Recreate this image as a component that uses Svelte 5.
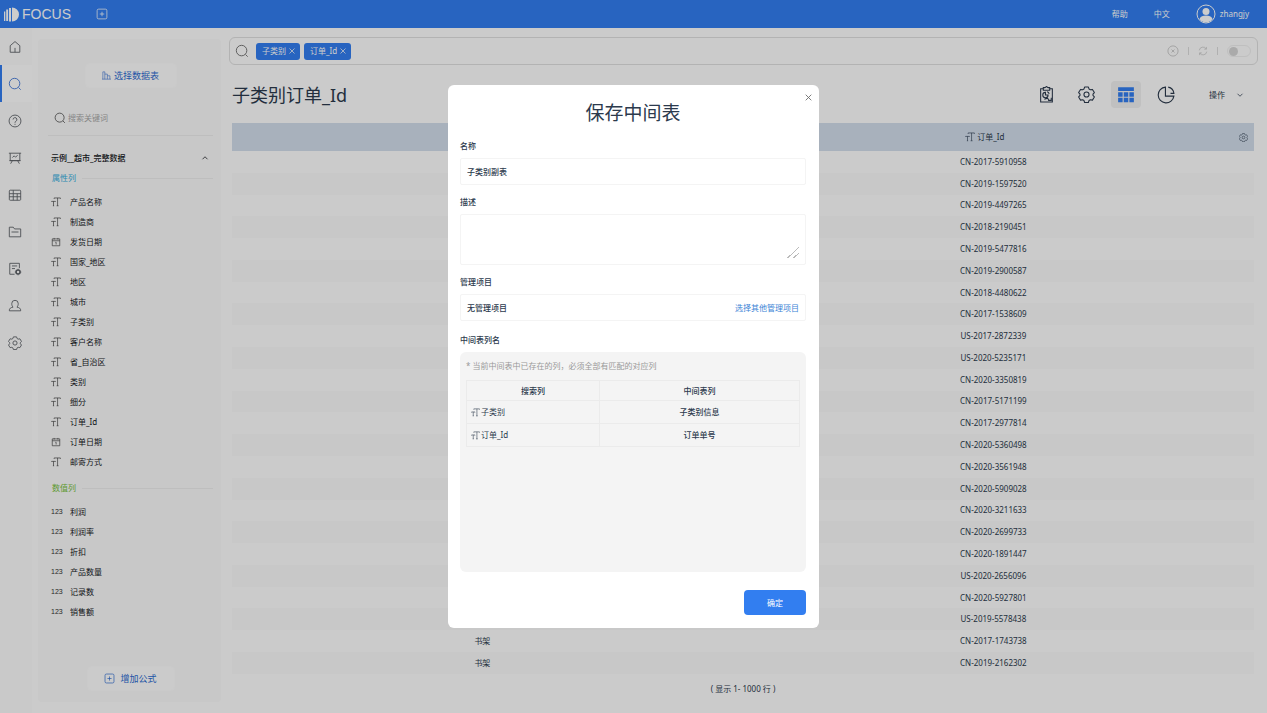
<script>
  let name = $state('子类别副表');
  let description = $state('');
  let keyword = $state('');
  let live = $state(false);
  let showModal = $state(true);
  let activeNav = $state('search');

  const navItems = [
    { id: 'home', label: '首页' },
    { id: 'search', label: '搜索' },
    { id: 'help', label: '问答' },
    { id: 'board', label: '看板' },
    { id: 'table', label: '数据表' },
    { id: 'folder', label: '资源' },
    { id: 'task', label: '任务' },
    { id: 'user', label: '用户' },
    { id: 'gear', label: '设置' }
  ];

  const attributes = [
    { name: '产品名称', type: 'text' },
    { name: '制造商', type: 'text' },
    { name: '发货日期', type: 'date' },
    { name: '国家_地区', type: 'text' },
    { name: '地区', type: 'text' },
    { name: '城市', type: 'text' },
    { name: '子类别', type: 'text' },
    { name: '客户名称', type: 'text' },
    { name: '省_自治区', type: 'text' },
    { name: '类别', type: 'text' },
    { name: '细分', type: 'text' },
    { name: '订单_Id', type: 'text' },
    { name: '订单日期', type: 'date' },
    { name: '邮寄方式', type: 'text' }
  ];

  const measures = ['利润', '利润率', '折扣', '产品数量', '记录数', '销售额'];

  let tags = $state(['子类别', '订单_Id']);

  const orders = [
    'CN-2017-5910958', 'CN-2019-1597520', 'CN-2019-4497265', 'CN-2018-2190451',
    'CN-2019-5477816', 'CN-2019-2900587', 'CN-2018-4480622', 'CN-2017-1538609',
    'US-2017-2872339', 'US-2020-5235171', 'CN-2020-3350819', 'CN-2017-5171199',
    'CN-2017-2977814', 'CN-2020-5360498', 'CN-2020-3561948', 'CN-2020-5909028',
    'CN-2020-3211633', 'CN-2020-2699733', 'CN-2020-1891447', 'US-2020-2656096',
    'CN-2020-5927801', 'US-2019-5578438', 'CN-2017-1743738', 'CN-2019-2162302'
  ];

  const mapping = [
    { from: '子类别', to: '子类别信息' },
    { from: '订单_Id', to: '订单单号' }
  ];

  function removeTag(tag) {
    tags = tags.filter((t) => t !== tag);
  }
</script>

{#snippet icon(id, size)}
  <svg width={size} height={size} viewBox="0 0 16 16" fill="none" stroke="currentColor" stroke-width="1" aria-hidden="true">
    {#if id === 'home'}
      <path d="M2.5 6.5 8 1.8l5.5 4.7V14h-11zM8 14V9" />
    {:else if id === 'search'}
      <circle cx="7.5" cy="7.5" r="6" />
      <path d="m12 12 2.5 2.5" />
    {:else if id === 'help'}
      <circle cx="8" cy="8" r="6.8" />
      <path d="M5.8 6.3a2.2 2.2 0 1 1 3.2 2c-.8.4-1 .8-1 1.7M8 11.2v1.2" />
    {:else if id === 'board'}
      <path d="M1 2.500h14M2.500 2.500v8.500h11v-8.500M1.500 11h13M5 11l-2 3.500M11 11l2 3.500M5 7.500l2-2 1.500 1.500 2.500-2" />
    {:else if id === 'table'}
      <rect x="1.500" y="2.500" width="13" height="11.500" rx="1" />
      <path d="M1.500 6.500h13M1.500 10h13M6 2.500V14M10.500 6.500V14" />
    {:else if id === 'folder'}
      <path d="M1.500 13.500v-11h4.500l1.500 2h7v9zM4 8h8" />
    {:else if id === 'task'}
      <path d="M7.500 14H2V1.500h11V7M4.500 4.500h6M4.500 7.500h3.500" />
      <circle cx="11.500" cy="11.500" r="2.300" stroke-width="1.800" />
      <path d="M11.500 7.800v1M11.500 14.200v1M7.800 11.500h1M14.200 11.500h1" />
    {:else if id === 'user'}
      <path d="M5.800 9.300C4.500 8 4.300 6.500 4.300 5.200a3.700 3.700 0 0 1 7.400 0c0 1.300-.2 2.800-1.500 4.100 2.300.4 4.600 1.300 4.300 4.200h-13c-.3-2.900 2-3.800 4.300-4.200z" />
    {:else if id === 'gear'}
      <path d="M6.200 1h3.600l.6 1.900 1.200.7 2-.4 1.800 3-1.300 1.500v1.100l1.300 1.500-1.800 3-2-.4-1.200.7-.6 1.900H6.200l-.6-1.900-1.200-.7-2 .4-1.800-3 1.300-1.500V7.700L.6 6.200l1.800-3 2 .4 1.200-.7z" stroke-linejoin="round" />
      <circle cx="8" cy="8" r="2.400" />
    {:else if id === 'text'}
      <path d="M5 3V1.500h10V3M10.500 1.500v12.500M9 14h3M1 8V7h6v1M4 7v7M3 14h2" />
    {:else if id === 'date'}
      <path d="M2 3h12v11H2zM2 6h12M5 1.500V4M11 1.500V4M7 8.500h1.200V12" />
    {:else if id === 'chart'}
      <path d="M1.500 14.500v-13H5v13M5 5.500h4.500v9M9.500 8.500H14v6M0 14.500h16" />
    {:else if id === 'plus'}
      <rect x="1.500" y="1.500" width="13" height="13" rx="2" />
      <path d="M8 5v6M5 8h6" />
    {:else if id === 'report'}
      <path d="M5 2.500H2.500v12.500h11V2.500H11M5 1.500h1.500L8 .5l1.500 1H11v2.500H5z" />
      <path d="M7 6a2.500 2.500 0 1 0 2.500 2.500H7zM8.500 5.500a2.500 2.500 0 0 1 2 2M6 12.500l3-1 1 1.500M9.500 13.500h3v-2.500" />
    {:else if id === 'grid'}
      <path d="M1 1h14v3.500H1zM1 5.500h4v4H1zM6 5.500h4v4H6zM11 5.500h4v4h-4zM1 10.500h4v4H1zM6 10.500h4v4H6zM11 10.500h4v4h-4z" fill="currentColor" stroke="none" />
    {:else if id === 'pie'}
      <path d="M7.500 1A7 7 0 1 0 15 9H7.500zM10 1a6.300 6.300 0 0 1 5 5.500H12" />
    {:else if id === 'up'}
      <path d="m3 10.500 5-5 5 5" stroke-width="1.500" />
    {:else if id === 'down'}
      <path d="m3 5.500 5 5 5-5" stroke-width="1.500" />
    {:else if id === 'close'}
      <path d="m3 3 10 10M13 3 3 13" stroke-width="1.500" />
    {:else if id === 'clear'}
      <circle cx="8" cy="8" r="6.800" />
      <path d="m6 6 4 4M10 6l-4 4" />
    {:else if id === 'refresh'}
      <path d="M2 7a6 6 0 0 1 11-2.500M13.500 1.500v3.500H10M14 9a6 6 0 0 1-11 2.500M2.500 14.500V11H6" />
    {/if}
  </svg>
{/snippet}

<div class="app">
  <header class="topbar">
    <a class="logo" href="#home">
      <svg width="15" height="15" viewBox="0 0 15 15" fill="#fff" aria-hidden="true">
        <path d="M0 4.500h1.300V14H0zM2.200 2.500h1.900V14H2.200zM5 1h2v13.500H5zM8 .5a7 7 0 0 1 0 14z" />
      </svg>
      <span>FOCUS</span>
    </a>
    <button class="new-tab" aria-label="新建">{@render icon('plus', 12)}</button>
    <nav class="top-links">
      <a href="#help">帮助</a>
      <a href="#lang">中文</a>
      <a class="account" href="#account">
        <svg width="20" height="20" viewBox="0 0 20 20" aria-hidden="true">
          <circle cx="10" cy="10" r="9" fill="none" stroke="#fff" />
          <circle cx="10" cy="7.500" r="3.500" fill="#fff" />
          <path d="M3.500 15c1-2.800 3.500-3.500 6.500-3.500s5.500.7 6.500 3.500a8 8 0 0 1-13 0z" fill="#fff" />
        </svg>
        <span>zhangjy</span>
      </a>
    </nav>
  </header>

  <div class="body">
    <nav class="rail">
      {#each navItems as item}
        <button
          class:active={activeNav === item.id}
          aria-label={item.label}
          onclick={() => (activeNav = item.id)}
        >
          {@render icon(item.id, 14)}
        </button>
      {/each}
    </nav>

    <aside class="panel">
      <button class="panel-btn choose">{@render icon('chart', 9)}选择数据表</button>
      <label class="keyword">
        {@render icon('search', 12)}
        <input type="text" aria-label="搜索关键词" placeholder="搜索关键词" bind:value={keyword} />
      </label>
      <button class="source">示例__超市_完整数据 {@render icon('up', 8)}</button>

      <h3 class="group attr">属性列</h3>
      <ul>
        {#each attributes as col}
          <li><span class="type">{@render icon(col.type, 10)}</span>{col.name}</li>
        {/each}
      </ul>

      <h3 class="group num">数值列</h3>
      <ul>
        {#each measures as col}
          <li><span class="type">123</span>{col}</li>
        {/each}
      </ul>

      <button class="panel-btn formula">{@render icon('plus', 11)}增加公式</button>
    </aside>

    <main>
      <div class="searchbar">
        {@render icon('search', 14)}
        <div class="tags">
          {#each tags as tag}
            <span class="tag">
              {tag}
              <button aria-label="移除{tag}" onclick={() => removeTag(tag)}>{@render icon('close', 8)}</button>
            </span>
          {/each}
        </div>
        <div class="tools">
          <button aria-label="清空">{@render icon('clear', 12)}</button>
          <i></i>
          <button aria-label="刷新">{@render icon('refresh', 10)}</button>
          <i></i>
          <input class="switch" type="checkbox" aria-label="实时搜索" bind:checked={live} />
        </div>
      </div>

      <section class="result">
        <div class="result-head">
          <h1>子类别订单_Id</h1>
          <div class="views">
            <button aria-label="报告">{@render icon('report', 17)}</button>
            <button aria-label="配置">{@render icon('gear', 17)}</button>
            <button class="on" aria-label="表格">{@render icon('grid', 18)}</button>
            <button aria-label="图形">{@render icon('pie', 18)}</button>
          </div>
          <button class="actions">操作 {@render icon('down', 8)}</button>
        </div>

        <div class="grid">
          <table>
            <thead>
              <tr>
                <th class="first"><div class="th">{@render icon('text', 10)}子类别</div></th>
                <th>
                  <div class="th">
                    <span class="th-name">{@render icon('text', 10)}订单_Id</span>
                    <button aria-label="列设置">{@render icon('gear', 9)}</button>
                  </div>
                </th>
              </tr>
            </thead>
            <tbody>
              {#each orders as order}
                <tr><td>书架</td><td>{order}</td></tr>
              {/each}
            </tbody>
          </table>
        </div>
        <p class="count">( 显示 1- 1000 行 )</p>
      </section>
    </main>
  </div>
</div>

{#if showModal}
  <div class="overlay">
    <div class="modal" role="dialog" aria-modal="true" aria-labelledby="modal-title">
      <button class="close" aria-label="关闭" onclick={() => (showModal = false)}>{@render icon('close', 9)}</button>
      <h2 id="modal-title">保存中间表</h2>

      <label class="caption" for="mt-name">名称</label>
      <input id="mt-name" class="box" type="text" bind:value={name} />

      <label class="caption" for="mt-desc">描述</label>
      <div class="box area">
        <textarea id="mt-desc" bind:value={description}></textarea>
      </div>

      <div class="caption">管理项目</div>
      <div class="box project">
        <span>无管理项目</span>
        <a href="#projects">选择其他管理项目</a>
      </div>

      <div class="caption">中间表列名</div>
      <div class="columns">
        <p>* 当前中间表中已存在的列，必须全部有匹配的对应列</p>
        <table>
          <thead>
            <tr><th class="from">搜索列</th><th>中间表列</th></tr>
          </thead>
          <tbody>
            {#each mapping as row}
              <tr>
                <td class="from"><span>{@render icon('text', 9)}{row.from}</span></td>
                <td>{row.to}</td>
              </tr>
            {/each}
          </tbody>
        </table>
      </div>

      <button class="confirm" onclick={() => (showModal = false)}>确定</button>
    </div>
  </div>
{/if}

<style>
  .app, .overlay {
    font-family: 'Noto Sans', 'Noto Sans CJK SC', sans-serif;
    font-size: 8px;
    line-height: 12px;
    color: #2c3a4d;
    box-sizing: border-box;
  }

  .app *, .overlay * {
    box-sizing: border-box;
  }

  .app {
    display: flex;
    flex-direction: column;
    min-height: 100vh;
    background: #fefefe;
  }

  svg {
    display: block;
    flex: none;
  }

  button {
    display: flex;
    align-items: center;
    justify-content: center;
    padding: 0;
    border: none;
    background: none;
    color: inherit;
    font: inherit;
    cursor: pointer;
  }

  input, textarea {
    font: inherit;
    color: inherit;
    outline: none;
  }

  a {
    color: inherit;
    text-decoration: none;
  }

  h1, h2, h3, p, ul {
    margin: 0;
    padding: 0;
    font-weight: 400;
  }

  ul {
    list-style: none;
  }

  table {
    width: 100%;
    border-collapse: collapse;
    table-layout: fixed;
  }

  .topbar {
    display: flex;
    align-items: center;
    height: 28px;
    padding: 0 18px 0 4px;
    background: #327ef0;
    color: #fff;
  }

  .logo {
    display: flex;
    align-items: center;
    gap: 3px;
    font-family: 'Liberation Sans', sans-serif;
    font-size: 14px;
  }

  .new-tab {
    margin-left: 25px;
  }

  .top-links {
    display: flex;
    align-items: center;
    gap: 26px;
    margin-left: auto;
  }

  .account {
    display: flex;
    align-items: center;
    gap: 4px;
  }

  .body {
    display: flex;
    flex: 1;
  }

  .rail {
    width: 32px;
    margin-right: 6px;
    background: #fcfcfc;
    color: #5c6066;
  }

  .rail button {
    width: 100%;
    height: 37px;
    border-left: 2px solid transparent;
    padding-right: 4px;
  }

  .rail .active {
    border-left-color: #327ef0;
    background: #fff;
    color: #3d74d6;
  }

  .panel {
    display: flex;
    flex-direction: column;
    width: 183px;
    margin: 11px 8px 11px 0;
    padding: 24px 8px 11px 10px;
    border-radius: 4px;
    background: #fafafa;
    color: #15181c;
  }

  .panel-btn {
    align-self: center;
    gap: 3px;
    height: 25px;
    border: 1px solid #fdfdfd;
    border-radius: 4px;
    background: #fefefe;
    color: #2c6ad0;
    font-size: 9px;
  }

  .choose {
    width: 92px;
  }

  .formula {
    gap: 5px;
    width: 88px;
    margin-top: auto;
  }

  .keyword {
    display: flex;
    align-items: center;
    gap: 2px;
    height: 36px;
    margin-top: 12px;
    padding-left: 6px;
    border-bottom: 1px solid #eeeeee;
    color: #444;
  }

  .keyword input {
    width: 120px;
    border: none;
    padding: 0;
    background: none;
  }

  .keyword input::placeholder {
    color: #a8a8a8;
    opacity: 1;
  }

  .source {
    justify-content: space-between;
    height: 20px;
    margin-top: 12px;
    padding: 0 4px 0 3px;
    font-weight: 500;
  }

  .group {
    display: flex;
    align-items: center;
    gap: 6px;
    height: 20px;
    padding-left: 4px;
    font-size: 8px;
  }

  .group::after {
    content: '';
    flex: 1;
    border-top: 1px solid #eeeeee;
  }

  .attr {
    color: #35aede;
    margin-bottom: 4px;
  }

  .num {
    color: #77c13a;
    margin: 6px 0 4px;
  }

  .panel li {
    display: flex;
    align-items: center;
    height: 20px;
    padding-left: 3px;
  }

  .type {
    width: 19px;
    font-family: 'Liberation Sans', sans-serif;
    font-size: 7px;
    color: #333;
  }

  main {
    display: flex;
    flex: 1;
    flex-direction: column;
    min-width: 0;
    padding: 9px 9px 0 0;
  }

  .searchbar {
    display: flex;
    align-items: center;
    gap: 7px;
    height: 28px;
    padding: 0 6px 0 5px;
    border: 1px solid #e0e0e0;
    border-radius: 6px;
    color: #666;
  }

  .tags {
    display: flex;
    gap: 4px;
  }

  .tag {
    display: flex;
    align-items: center;
    gap: 2px;
    height: 17px;
    padding: 0 4px 0 6px;
    border-radius: 3px;
    background: #327ef0;
    color: #fff;
  }

  .tools {
    display: flex;
    align-items: center;
    gap: 9px;
    margin-left: auto;
    color: #bdbdbd;
  }

  .tools i {
    width: 1px;
    height: 8px;
    background: #dddddd;
  }

  .switch {
    appearance: none;
    display: flex;
    align-items: center;
    width: 24px;
    height: 12px;
    margin: 0;
    padding: 0 1px;
    border: 1px solid #efefef;
    border-radius: 6px;
  }

  .switch::before {
    content: '';
    width: 9px;
    height: 9px;
    border-radius: 50%;
    background: #d5d5d5;
  }

  .switch:checked {
    justify-content: flex-end;
  }

  .result {
    display: flex;
    flex: 1;
    flex-direction: column;
    padding: 0 4px 0 3px;
  }

  .result-head {
    display: flex;
    align-items: center;
    height: 58px;
    padding: 1px 10px 0 0;
  }

  h1 {
    font-size: 18px;
    line-height: 28px;
  }

  .views {
    display: flex;
    gap: 10px;
    margin-left: auto;
  }

  .views button {
    width: 30px;
    height: 27px;
    border-radius: 4px;
  }

  .views .on {
    background: #f0f0f0;
    color: #327ef0;
  }

  .actions {
    gap: 11px;
    margin-left: 28px;
  }

  .grid {
    display: flex;
    flex: 1;
  }

  .grid th {
    height: 28px;
    padding: 0;
    background: #d2deec;
    font-weight: 400;
  }

  .grid .first {
    width: 49%;
  }

  .th, .th-name {
    display: flex;
    flex: 1;
    align-items: center;
    justify-content: center;
    gap: 2px;
  }

  .th button {
    margin-right: 6px;
  }

  .grid td {
    padding: 0;
    text-align: center;
  }

  .grid tbody tr:nth-child(even) {
    background: #fafafa;
  }

  .count {
    height: 39px;
    padding-top: 9px;
    text-align: center;
  }

  .overlay {
    position: fixed;
    inset: 0;
    display: flex;
    align-items: center;
    justify-content: center;
    background: rgba(0, 0, 0, 0.2);
  }

  .modal {
    position: relative;
    display: flex;
    flex-direction: column;
    width: 371px;
    padding: 14px 13px 13px 12px;
    border-radius: 6px;
    background: #fff;
  }

  .close {
    position: absolute;
    top: 8px;
    right: 6px;
    color: #666;
  }

  h2 {
    margin-bottom: 12px;
    font-size: 19px;
    line-height: 28px;
    text-align: center;
  }

  .caption {
    height: 19px;
    line-height: 14px;
    font-weight: 500;
  }

  .box {
    width: 100%;
    height: 27px;
    margin: 0 0 10px;
    padding: 0 6px;
    border: 1px solid #f4f4f4;
    border-radius: 2px;
    background: #fff;
    font-weight: 500;
  }

  .area {
    height: 51px;
    padding: 6px;
  }

  textarea {
    display: block;
    width: 100%;
    height: 100%;
    padding: 0;
    border: none;
    resize: vertical;
  }

  textarea::-webkit-resizer {
    background: linear-gradient(135deg, transparent 60%, #bbb 60% 65%, transparent 65% 80%, #bbb 80% 85%, transparent 85%);
  }

  .project {
    display: flex;
    align-items: center;
    justify-content: space-between;
    margin-bottom: 12px;
  }

  .project a {
    color: #3d84d6;
    font-weight: 400;
  }

  .columns {
    height: 220px;
    padding: 8px 6px;
    border-radius: 6px;
    background: #f4f4f4;
  }

  .columns p {
    margin-bottom: 8px;
    color: #999;
  }

  .columns th, .columns td {
    height: 23px;
    padding: 0 4px;
    border: 1px solid #ebebeb;
    text-align: center;
    font-weight: 500;
  }

  .columns th {
    height: 20px;
  }

  .columns .from {
    width: 40%;
  }

  .columns td.from {
    font-weight: 400;
  }

  .columns td span {
    display: flex;
    align-items: center;
    gap: 1px;
  }

  .confirm {
    align-self: flex-end;
    width: 62px;
    height: 25px;
    margin-top: 18px;
    border-radius: 4px;
    background: #327ef0;
    color: #fff;
  }
</style>
